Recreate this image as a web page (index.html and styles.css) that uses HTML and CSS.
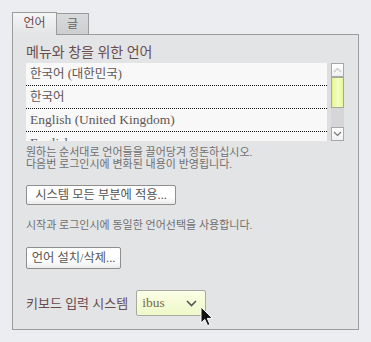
FILE: index.html
```html
<!DOCTYPE html>
<html lang="ko">
<head>
  <meta charset="UTF-8" />
  <title>언어 설정</title>
  <link rel="stylesheet" href="styles.css">
</head>
<body>

  <div class="tabs">
    <div class="tab active">언어</div>
    <div class="tab">글</div>
  </div>

  <div class="panel">
    <div class="section-label">메뉴와 창을 위한 언어</div>

    <div class="lang-list">
      <ul class="rows">
        <li>한국어 (대한민국)</li>
        <li>한국어</li>
        <li><span class="latin">English (United Kingdom)</span></li>
        <li><span class="latin">English</span></li>
      </ul>
      <div class="scrollbar">
        <div class="sb-btn">
          <svg width="9" height="6" viewBox="0 0 9 6"><path d="M1 5 L4.5 1.5 L8 5" fill="none" stroke="#c8c8c8" stroke-width="1.2"/></svg>
        </div>
        <div class="sb-thumb"></div>
        <div class="sb-track"></div>
        <div class="sb-btn">
          <svg width="9" height="6" viewBox="0 0 9 6"><path d="M1 1 L4.5 4.5 L8 1" fill="none" stroke="#777" stroke-width="1.2"/></svg>
        </div>
      </div>
    </div>

    <p class="hint">원하는 순서대로 언어들을 끌어당겨 정돈하십시오.<br>다음번 로그인시에 변화된 내용이 반영됩니다.</p>

    <button class="btn apply-btn">시스템 모든 부분에 적용...</button>

    <p class="hint hint-two">시작과 로그인시에 동일한 언어선택을 사용합니다.</p>

    <button class="btn install-btn">언어 설치/삭제...</button>

    <div class="keyboard-row">
      <span class="section-label">키보드 입력 시스템</span>
      <div class="select">
        <span>ibus</span>
        <svg width="11" height="7" viewBox="0 0 11 7"><path d="M1 1 L5.5 5.5 L10 1" fill="none" stroke="#555" stroke-width="1.6"/></svg>
        <svg class="cursor" width="14" height="21" viewBox="0 0 14 21">
          <path d="M1 1 L1 17 L4.8 13.4 L7.6 19.6 L10 18.5 L7.3 12.4 L12.4 12.4 Z" fill="#111" stroke="#fff" stroke-width="1" stroke-linejoin="round"/>
        </svg>
      </div>
    </div>
  </div>

</body>
</html>
```

FILE: styles.css
```css
* {
  box-sizing: border-box;
}

body {
  margin: 0;
  padding: 12px 0 0 12px;
  background-color: #ecedf0;
  font-family: "Liberation Serif", "Noto Sans CJK KR", serif;
  color: #5a5050;
}

.tabs {
  display: flex;
  align-items: flex-end;
  height: 22px;
}

.tab {
  height: 21px;
  width: 32px;
  border: 1px solid #9c9c9c;
  border-left: none;
  border-bottom: none;
  background: linear-gradient(#d9dadc, #cdced0);
  font-size: 12px;
  line-height: 20px;
  text-align: center;
  color: #666;
}

.tab.active {
  height: 23px;
  width: 45px;
  margin-bottom: -1px;
  border-left: 1px solid #9c9c9c;
  background: linear-gradient(#f5f5f6, #e3e4e6);
  position: relative;
  z-index: 1;
  color: #6a4c4c;
}

.panel {
  width: 347px;
  height: 296px;
  border: 1px solid #9c9c9c;
  background-color: #e3e4e6;
  padding: 8px 0 0 13px;
}

.section-label {
  font-size: 14px;
  line-height: 19px;
  color: #6a4c4c;
}

.lang-list {
  display: flex;
  width: 318px;
  height: 78px;
  margin-top: 1px;
  background-color: #dedee0;
}

.rows {
  list-style: none;
  margin: 0;
  padding: 0;
  width: 301px;
  height: 78px;
  overflow: hidden;
  background-color: #f8f8f8;
}

.rows li {
  height: 23px;
  line-height: 22px;
  padding-left: 4px;
  font-size: 12.5px;
  color: #5e5656;
  border-bottom: 1px dotted #111;
}

.rows .latin {
  font-size: 13.5px;
}

.scrollbar {
  display: flex;
  flex-direction: column;
  width: 13px;
  margin-left: 4px;
}

.sb-btn {
  height: 14px;
  border: 1px solid #a8a8aa;
  background: linear-gradient(#ffffff, #f0f0f0);
  display: flex;
  align-items: center;
  justify-content: center;
}

.sb-thumb {
  height: 31px;
  border: 1px solid #a4ab94;
  background: linear-gradient(90deg, #e2f58c, #f4ffc6 55%, #e4f79a);
}

.sb-track {
  flex: 1;
  background-color: #d6d6d8;
}

.hint {
  margin: 5px 0 0;
  font-size: 11px;
  line-height: 12px;
  color: #707070;
}

.hint-two {
  margin-top: 14px;
}

.btn {
  display: block;
  height: 20px;
  padding: 0 4px;
  border: 1px solid #8e8e8e;
  border-radius: 2px;
  background: linear-gradient(#ffffff 60%, #ececec);
  font-family: inherit;
  font-size: 12.3px;
  line-height: 17px;
  color: #555;
}

.apply-btn {
  width: 150px;
  margin-top: 15px;
}

.install-btn {
  width: 95px;
  height: 22px;
  margin-top: 16px;
}

.keyboard-row {
  display: flex;
  align-items: center;
  gap: 8px;
  margin-top: 21px;
}

.keyboard-row .section-label {
  font-size: 13px;
}

.select {
  position: relative;
  display: flex;
  align-items: center;
  justify-content: space-between;
  width: 70px;
  height: 26px;
  padding: 0 8px 0 5px;
  border: 1px solid #a9a9a0;
  border-radius: 2px;
  background: linear-gradient(#fbffe6, #eef8c8);
  font-size: 13.5px;
  color: #7a6a44;
}

.cursor {
  position: absolute;
  left: 63px;
  top: 15px;
}
```
